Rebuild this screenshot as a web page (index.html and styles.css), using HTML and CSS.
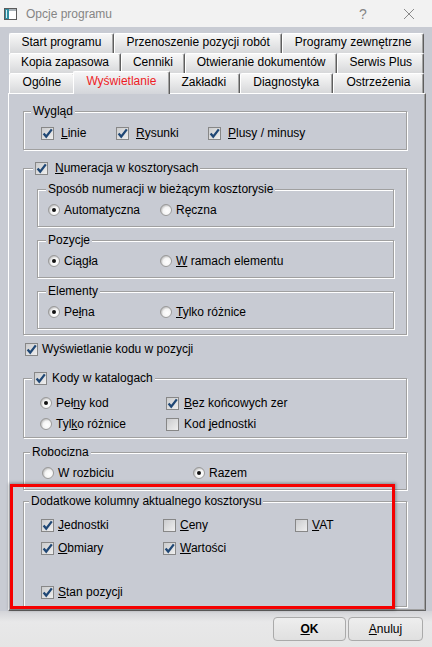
FILE: index.html
```html
<!DOCTYPE html>
<html lang="pl">
<head>
    <meta charset="UTF-8">
    <title>Opcje programu</title>
    <link rel="stylesheet" href="styles.css">
</head>
<body>
<svg class="defs" aria-hidden="true">
    <defs>
        <linearGradient id="boxFill" x1="0" y1="0" x2="1" y2="1">
            <stop offset="0" stop-color="#c9cacc"/>
            <stop offset="1" stop-color="#f0f0f0"/>
        </linearGradient>
        <radialGradient id="radioFill" cx=".6" cy=".6" r=".6">
            <stop offset="0" stop-color="#ffffff"/>
            <stop offset=".6" stop-color="#f4f4f4"/>
            <stop offset="1" stop-color="#b9b9b9"/>
        </radialGradient>
        <symbol id="cb" viewBox="0 0 13 13">
            <rect x=".5" y=".5" width="12" height="12" fill="url(#boxFill)" stroke="#878787"/>
        </symbol>
        <symbol id="cb-on" viewBox="0 0 13 13">
            <rect x=".5" y=".5" width="12" height="12" fill="url(#boxFill)" stroke="#878787"/>
            <path d="M2.6 6.6 L5.2 9.6 L10.8 2.4" fill="none" stroke="#1f4775" stroke-width="2.3"/>
        </symbol>
        <symbol id="rb" viewBox="0 0 12 12">
            <circle cx="6" cy="6" r="5.5" fill="url(#radioFill)" stroke="#9a9a9a"/>
        </symbol>
        <symbol id="rb-on" viewBox="0 0 12 12">
            <circle cx="6" cy="6" r="5.5" fill="url(#radioFill)" stroke="#9a9a9a"/>
            <circle cx="6" cy="6" r="2" fill="#111"/>
        </symbol>
    </defs>
</svg>

<div class="window">
    <div class="titlebar">
        <svg class="app-icon" viewBox="0 0 13 12">
            <rect x=".5" y=".5" width="12" height="11" fill="#fff" stroke="#5b5b5b"/>
            <rect x="1" y="1" width="4" height="10" fill="#2f8ea2"/>
            <rect x="2" y="2" width="1" height="8" fill="#d8eef2"/>
            <rect x="5" y="1" width="7" height="2" fill="#a9b2b8"/>
        </svg>
        <span class="title">Opcje programu</span>
        <span class="tb-btn help">?</span>
        <span class="tb-btn close">
            <svg viewBox="0 0 10 10"><path d="M0 0 L10 10 M10 0 L0 10" stroke="#8a8a8a" stroke-width="1"/></svg>
        </span>
    </div>

    <div class="tabs">
        <div class="tab-row">
            <div class="tab">Start programu</div>
            <div class="tab">Przenoszenie pozycji robót</div>
            <div class="tab">Programy zewnętrzne</div>
        </div>
        <div class="tab-row">
            <div class="tab">Kopia zapasowa</div>
            <div class="tab">Cenniki</div>
            <div class="tab">Otwieranie dokumentów</div>
            <div class="tab">Serwis Plus</div>
        </div>
        <div class="tab-row">
            <div class="tab">Ogólne</div>
            <div class="tab active">Wyświetlanie</div>
            <div class="tab">Zakładki</div>
            <div class="tab">Diagnostyka</div>
            <div class="tab">Ostrzeżenia</div>
        </div>
    </div>

    <div class="panel">
        <div class="grp g-look">
            <div class="cap">Wygląd</div>
            <div class="row">
                <label class="opt"><svg><use href="#cb-on"/></svg><span class="lbl"><u>L</u>inie</span></label>
                <label class="opt"><svg><use href="#cb-on"/></svg><span class="lbl"><u>R</u>ysunki</span></label>
                <label class="opt"><svg><use href="#cb-on"/></svg><span class="lbl"><u>P</u>lusy / minusy</span></label>
            </div>
        </div>

        <div class="grp g-num">
            <div class="cap cap-num">
                <label class="opt"><svg><use href="#cb-on"/></svg><span class="lbl"><u>N</u>umeracja w kosztorysach</span></label>
            </div>
            <div class="grp g-sub first">
                <div class="cap">Sposób numeracji w bieżącym kosztorysie</div>
                <div class="row">
                    <label class="opt radio"><svg><use href="#rb-on"/></svg><span class="lbl">Automatyczna</span></label>
                    <label class="opt radio"><svg><use href="#rb"/></svg><span class="lbl">Ręczna</span></label>
                </div>
            </div>
            <div class="grp g-sub">
                <div class="cap">Pozycje</div>
                <div class="row">
                    <label class="opt radio"><svg><use href="#rb-on"/></svg><span class="lbl">Ciągła</span></label>
                    <label class="opt radio"><svg><use href="#rb"/></svg><span class="lbl"><u>W</u> ramach elementu</span></label>
                </div>
            </div>
            <div class="grp g-sub">
                <div class="cap">Elementy</div>
                <div class="row">
                    <label class="opt radio"><svg><use href="#rb-on"/></svg><span class="lbl">Pe<u>ł</u>na</span></label>
                    <label class="opt radio"><svg><use href="#rb"/></svg><span class="lbl"><u>T</u>ylko różnice</span></label>
                </div>
            </div>
        </div>

        <div class="row code-row">
            <label class="opt"><svg><use href="#cb-on"/></svg><span class="lbl">Wyświetlanie kodu w pozycji</span></label>
        </div>

        <div class="grp g-kody">
            <div class="cap cap-kody">
                <label class="opt"><svg><use href="#cb-on"/></svg><span class="lbl">Kody w katalogach</span></label>
            </div>
            <div class="row">
                <label class="opt radio"><svg><use href="#rb-on"/></svg><span class="lbl">Peł<u>n</u>y kod</span></label>
                <label class="opt"><svg><use href="#cb-on"/></svg><span class="lbl"><u>B</u>ez końcowych zer</span></label>
            </div>
            <div class="row">
                <label class="opt radio"><svg><use href="#rb"/></svg><span class="lbl">Tyl<u>k</u>o różnice</span></label>
                <label class="opt"><svg><use href="#cb"/></svg><span class="lbl">Kod <u>j</u>ednostki</span></label>
            </div>
        </div>

        <div class="grp g-robo">
            <div class="cap">Robocizna</div>
            <div class="row">
                <label class="opt radio"><svg><use href="#rb"/></svg><span class="lbl">W rozbiciu</span></label>
                <label class="opt radio"><svg><use href="#rb-on"/></svg><span class="lbl">Razem</span></label>
            </div>
        </div>

        <div class="grp g-extra">
            <div class="cap">Dodatkowe kolumny aktualnego kosztorysu</div>
            <div class="row">
                <label class="opt"><svg><use href="#cb-on"/></svg><span class="lbl"><u>J</u>ednostki</span></label>
                <label class="opt"><svg><use href="#cb"/></svg><span class="lbl"><u>C</u>eny</span></label>
                <label class="opt"><svg><use href="#cb"/></svg><span class="lbl"><u>V</u>AT</span></label>
            </div>
            <div class="row">
                <label class="opt"><svg><use href="#cb-on"/></svg><span class="lbl"><u>O</u>bmiary</span></label>
                <label class="opt"><svg><use href="#cb-on"/></svg><span class="lbl"><u>W</u>artości</span></label>
            </div>
            <div class="row last">
                <label class="opt"><svg><use href="#cb-on"/></svg><span class="lbl"><u>S</u>tan pozycji</span></label>
            </div>
        </div>
    </div>

    <div class="footer">
        <button class="btn ok"><u>O</u>K</button>
        <button class="btn cancel"><u>A</u>nuluj</button>
    </div>

    <div class="mark"></div>
</div>
</body>
</html>
```

FILE: styles.css
```css
body { margin: 0; background: #c8cbd3; font: 12px "Liberation Sans", Arial, sans-serif; color: #000; }
.defs { position: absolute; width: 0; height: 0; }
.window { position: relative; width: 432px; height: 647px; overflow: hidden; }

/* title bar */
.titlebar { height: 27px; background: #f2f2f2; display: flex; align-items: center; color: #858585; }
.app-icon { width: 13px; height: 12px; margin-left: 4px; flex: none; }
.title { margin-left: 9px; }
.tb-btn { width: 46px; text-align: center; }
.help { margin-left: auto; font-size: 14px; }
.close svg { width: 10px; height: 10px; display: block; margin: 0 auto; }

/* tabs */
.tabs { margin: 6px 8px 0 9px; }
.tab-row { display: flex; height: 20px; }
.tab {
    flex: 1 1 auto; box-sizing: border-box; height: 20px; line-height: 17px;
    text-align: center; white-space: nowrap;
    background: linear-gradient(#f8f8f8, #d7d8da);
    border-top: 1px solid #fff; border-left: 1px solid #fff; border-right: 1px solid #5e5e5e;
    box-shadow: inset -1px 0 #a3a3a3;
    border-radius: 2px 2px 0 0;
}
.tab.active {
    position: relative; z-index: 1;
    height: 23px; margin: -2px -2px -1px; line-height: 19px;
    color: #ee1c25;
    background: linear-gradient(#f6f6f7, #d3d5da);
}

/* main panel */
.panel {
    margin: 0 6px 0 8px; padding: 0 18px 3px 14px;
    border: 1px solid; border-color: #fff #646464 #646464 #fff;
    box-shadow: inset -1px -1px 0 #a0a0a0;
}

.grp { border: 1px solid #a0a0a0; box-shadow: inset 1px 1px 0 #fff, 1px 1px 0 #fff; }
.cap {
    width: fit-content; height: 14px; line-height: 14px; margin-top: -8px;
    padding: 0 2px; background: #c8cbd3; display: flex; align-items: center; white-space: nowrap;
}

.row { display: grid; grid-auto-flow: column; justify-content: start; align-items: center; height: 18px; }
.opt { display: flex; align-items: center; white-space: nowrap; }
.opt svg { width: 13px; height: 13px; flex: none; }
.opt.radio svg { width: 12px; height: 12px; }
.lbl { margin-left: 5px; line-height: 14px; }
.radio .lbl { margin-left: 4px; }
u { text-underline-offset: 1px; text-decoration-skip-ink: none; }

/* Wygląd */
.g-look { margin-top: 17px; padding-bottom: 7px; }
.g-look .cap { margin-left: 7px; }
.g-look .row { margin-top: 6px; padding-left: 17px; grid-template-columns: 75px 92px auto; }
.g-look .lbl { margin-left: 7px; }

/* Numeracja */
.g-num { margin-top: 18px; padding: 0 12px 5px 13px; }
.cap-num { margin-left: -4px; }
.cap-num .lbl { margin-left: 7px; }
.g-sub { margin-top: 13px; padding-bottom: 7px; }
.g-sub.first { margin-top: 14px; }
.g-sub .cap { margin-left: 8px; }
.g-sub .row { margin-top: 5px; padding-left: 10px; grid-template-columns: 112px auto; }

.code-row { margin-top: 5px; padding-left: 2px; }
.code-row .lbl { margin-left: 4px; }

/* Kody w katalogach */
.g-kody { margin-top: 20px; padding-bottom: 4px; }
.cap-kody { margin-left: 8px; }
.g-kody .row { margin-top: 3px; padding-left: 16px; grid-template-columns: 126px auto; }
.g-kody .cap + .row { margin-top: 9px; }

/* Robocizna */
.g-robo { margin-top: 14px; padding-bottom: 7px; }
.g-robo .cap { margin-left: 6px; }
.g-robo .row { margin-top: 5px; padding-left: 18px; grid-template-columns: 151px auto; }

/* Dodatkowe kolumny */
.g-extra { margin-top: 11px; padding-bottom: 5px; }
.g-extra .cap { margin-left: 5px; padding-right: 1px; }
.g-extra .row { margin-top: 5px; padding-left: 17px; grid-template-columns: 122px 132px auto; }
.g-extra .cap + .row { margin-top: 8px; }
.g-extra .row.last { margin-top: 26px; }
.g-extra .lbl { margin-left: 4px; }

/* bottom buttons */
.footer {
    height: 36px; box-sizing: border-box; padding: 6px 9px 0 0;
    display: flex; justify-content: flex-end; gap: 2px;
    background: linear-gradient(#d3d4d8, #e8e8e9 30%, #e5e5e5);
}
.btn {
    box-sizing: border-box; height: 24px; padding: 0;
    font: inherit; color: #000;
    border: 1px solid #aaaaaa; border-radius: 4px;
    background: linear-gradient(#eeeeee, #e0e0e0);
}
.ok { width: 73px; font-weight: bold; }
.cancel { width: 75px; }

/* red highlight frame */
.mark {
    position: absolute; left: 10px; top: 484px; width: 385px; height: 125px;
    box-sizing: border-box; border: 3px solid #f50000;
    box-shadow: 0 0 3px 1px rgba(0, 0, 0, .35);
}
```
